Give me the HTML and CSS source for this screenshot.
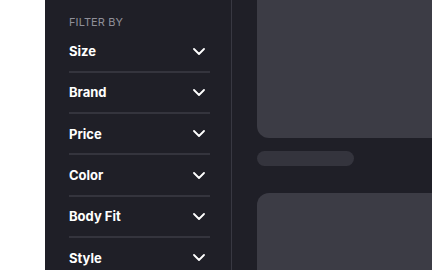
FILE: index.html
```html
<!DOCTYPE html>
<html>
<head>
<meta charset="utf-8">
<link rel="stylesheet" href="styles.css">
</head>
<body>
<div class="panel">
  <aside class="sidebar">
    <div class="heading">FILTER BY</div>
    <div class="filter"><span>Size</span><svg class="chev" viewBox="0 0 12 7"><polyline points="1,1 6,6 11,1"/></svg></div>
    <div class="filter"><span>Brand</span><svg class="chev" viewBox="0 0 12 7"><polyline points="1,1 6,6 11,1"/></svg></div>
    <div class="filter"><span>Price</span><svg class="chev" viewBox="0 0 12 7"><polyline points="1,1 6,6 11,1"/></svg></div>
    <div class="filter"><span>Color</span><svg class="chev" viewBox="0 0 12 7"><polyline points="1,1 6,6 11,1"/></svg></div>
    <div class="filter"><span>Body Fit</span><svg class="chev" viewBox="0 0 12 7"><polyline points="1,1 6,6 11,1"/></svg></div>
    <div class="filter"><span>Style</span><svg class="chev" viewBox="0 0 12 7"><polyline points="1,1 6,6 11,1"/></svg></div>
  </aside>
  <main class="content">
    <div class="card card-top"></div>
    <div class="pill"></div>
    <div class="card card-bottom"></div>
  </main>
</div>
</body>
</html>
```
FILE: styles.css
```css
html, body {
  margin: 0;
  height: 270px;
  overflow: hidden;
  background: #ffffff;
  font-family: Inter, "Noto Sans", sans-serif;
}
.panel {
  margin-left: 45px;
  height: 270px;
  background: #1f1f27;
  display: flex;
  overflow: hidden;
}
.sidebar {
  width: 141px;
  flex: none;
  padding: 14px 21px 0 24px;
  border-right: 1px solid #383842;
}
.heading {
  font-size: 11px;
  line-height: 16px;
  color: #8f8f99;
  letter-spacing: 0.1px;
  margin-bottom: 1.5px;
}
.filter {
  height: 39.3px;
  display: flex;
  align-items: center;
  justify-content: space-between;
  border-bottom: 2px solid #34343d;
  color: #ffffff;
  font-size: 13px;
  font-weight: 700;
}
.filter:last-child { border-bottom: none; }
.chev {
  width: 12px;
  height: 7px;
  margin-right: 5px;
  fill: none;
  stroke: #ffffff;
  stroke-width: 1.8;
  stroke-linecap: round;
  stroke-linejoin: round;
}
.content {
  flex: 1;
  padding-left: 25px;
  margin-top: -42px;
  overflow: hidden;
}
.card {
  width: 230px;
  background: #3c3c45;
  border-radius: 12px;
}
.card-top {
  height: 180px;
  margin-bottom: 13px;
}
.pill {
  width: 97px;
  height: 15px;
  border-radius: 8px;
  background: #34343d;
  margin-bottom: 27px;
}
.card-bottom {
  height: 200px;
}
```
